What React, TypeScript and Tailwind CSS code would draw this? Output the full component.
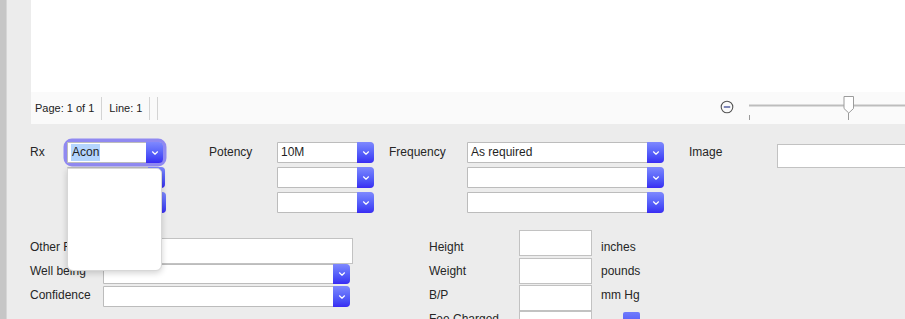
import type { ReactNode } from "react";

const Chevron = () => (
   <svg width="8" height="6" viewBox="0 0 8 6" fill="none">
      <path d="M1.5 1.8 L4 4.2 L6.5 1.8" stroke="#ffffff" strokeWidth="1.2" strokeLinecap="round" strokeLinejoin="round" />
   </svg>
);

const Select = ({ value, width, height = "h-[21px]", children }: { value?: string; width: string; height?: string; children?: ReactNode }) => (
   <div className={`${width} ${height} flex bg-white border border-[#bcbcbc] rounded-r-[4px] shrink-0`}>
      <div className="flex-1 flex items-center pl-[3px] pb-[1px] text-[12px] text-[#1f1f1f] overflow-hidden whitespace-nowrap">
         {children ?? value}
      </div>
      <div className="w-[17px] -my-px -mr-px flex items-center justify-center rounded-r-[4px] bg-gradient-to-b from-[#7f88fe] to-[#3a29f3]">
         <Chevron />
      </div>
   </div>
);

const Input = ({ width, height = "h-[25px]" }: { width: string; height?: string }) => (
   <div className={`${width} ${height} bg-white border border-[#c2c2c2] shrink-0`} />
);

const Label = ({ width, children }: { width: string; children: ReactNode }) => (
   <div className={`${width} shrink-0 text-[12px] text-[#262626] leading-[14px]`}>{children}</div>
);

// labels of the lower block sit on a 24px grid, independent of the field heights
const GridLabels = ({ width, items }: { width: string; items: string[] }) => (
   <div className={`${width} shrink-0 flex flex-col text-[12px] text-[#262626] leading-[24px] whitespace-nowrap`}>
      {items.map((t) => (
         <div key={t} className="h-[24px]">{t}</div>
      ))}
   </div>
);

const App = () => {
   return (
      <div className="w-[905px] h-[319px] overflow-hidden flex bg-[#ececec] font-['Liberation_Sans',Arial,sans-serif]">
         <div className="w-[7px] shrink-0 bg-[#c6c6c6] border-r border-[#d6d6d6]" />
         <div className="flex-1 flex flex-col min-w-0">
            {/* editor */}
            <div className="ml-[24px] flex flex-col">
               <div className="h-[92px] bg-white" />
               <div className="h-[32px] bg-[#fafafa] flex items-center text-[11px] text-[#222]">
                  <div className="pl-[4px] pr-[7px]">Page: 1 of 1</div>
                  <div className="w-px h-[23px] bg-[#d4d4d4]" />
                  <div className="px-[7px]">Line: 1</div>
                  <div className="w-px h-[23px] bg-[#d4d4d4]" />
                  <div className="w-[7px]" />
                  <div className="w-px h-[23px] bg-[#d4d4d4]" />
                  <div className="flex-1" />
                  <svg width="14" height="14" viewBox="0 0 14 14" className="mr-[15px] mt-[-2px]">
                     <circle cx="7" cy="7" r="5.8" fill="none" stroke="#555" strokeWidth="1.1" />
                     <path d="M3.8 7 H10.2" stroke="#2d3a8c" strokeWidth="1.2" />
                  </svg>
                  <svg width="156" height="32" viewBox="0 0 156 32" className="shrink-0">
                     <rect x="0" y="12.5" width="156" height="2" fill="#bdbdbd" />
                     <path d="M0.5 23 V28" stroke="#9a9a9a" strokeWidth="1" />
                     <path d="M99.5 21 V28" stroke="#9a9a9a" strokeWidth="1" />
                     <path d="M95 4.5 H104.5 V16.5 L99.75 21 L95 16.5 Z" fill="#ffffff" stroke="#9c9c9c" strokeWidth="1" />
                  </svg>
               </div>
            </div>

            {/* form */}
            <div className="pl-[23px] pt-[18px] relative">
               <div className="flex items-start">
                  <Label width="w-[37px] pt-[3px]">Rx</Label>
                  <div className="flex flex-col gap-[4px] w-[99px] relative">
                     <div className="rounded-[5px] ring-[3.5px] ring-[#9089f1] w-[96px]">
                        <Select width="w-[96px]">
                           <span className="bg-[#b4d5fe] px-[1px] leading-[17px]">Acon</span>
                        </Select>
                     </div>
                     <Select width="w-[98px]" />
                     <Select width="w-[99px]" />
                     <div className="absolute left-0 top-[26px] w-[95px] h-[103px] bg-white border border-[#d7d7d7] rounded-b-[6px] rounded-tr-[5px] shadow-[0_2px_6px_rgba(0,0,0,0.18)]" />
                  </div>
                  <div className="w-[43px] shrink-0" />
                  <Label width="w-[68px] pt-[3px]">Potency</Label>
                  <div className="flex flex-col gap-[4px]">
                     <Select width="w-[97px]" value="10M" />
                     <Select width="w-[97px]" />
                     <Select width="w-[97px]" />
                  </div>
                  <div className="w-[15px] shrink-0" />
                  <Label width="w-[78px] pt-[3px]">Frequency</Label>
                  <div className="flex flex-col gap-[4px]">
                     <Select width="w-[197px]" value="As required" />
                     <Select width="w-[197px]" />
                     <Select width="w-[197px]" />
                  </div>
                  <div className="w-[25px] shrink-0" />
                  <Label width="w-[88px] pt-[3px]">Image</Label>
                  <div className="mt-[2px]">
                     <Input width="w-[140px]" height="h-[24px]" />
                  </div>
               </div>

               <div className="flex items-start mt-[17px]">
                  <div className="pt-[5px]">
                     <GridLabels width="w-[73px]" items={["Other Rx", "Well being", "Confidence"]} />
                  </div>
                  <div className="flex flex-col mt-[8px]">
                     <Input width="w-[250px]" height="h-[26px]" />
                     <Select width="w-[247px]" height="h-[20px]" />
                     <div className="mt-[2px]">
                        <Select width="w-[247px]" />
                     </div>
                  </div>
                  <div className="w-[76px] shrink-0" />
                  <div className="pt-[5px]">
                     <GridLabels width="w-[90px]" items={["Height", "Weight", "B/P", "Fee Charged"]} />
                  </div>
                  <div className="flex flex-col">
                     <Input width="w-[73px]" height="h-[26px]" />
                     <div className="mt-[2px]">
                        <Input width="w-[73px]" height="h-[26px]" />
                     </div>
                     <div className="mt-[1px]">
                        <Input width="w-[73px]" height="h-[26px]" />
                     </div>
                     <Input width="w-[73px]" height="h-[25px]" />
                  </div>
                  <div className="pt-[5px] ml-[9px]">
                     <GridLabels width="w-[50px]" items={["inches", "pounds", "mm Hg"]} />
                     <div className="ml-[22px] mt-[5px] w-[17px] h-[20px] rounded-t-[2px] bg-gradient-to-b from-[#717cfc] to-[#4536f4]" />
                  </div>
               </div>
            </div>
         </div>
      </div>
   );
};

export default App;
